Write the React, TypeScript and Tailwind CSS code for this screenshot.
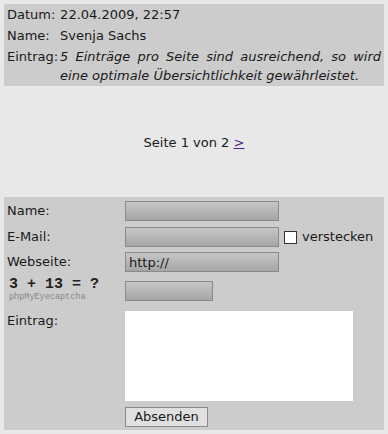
import React from 'react';

const inputCls =
  'h-[20px] border border-[#8a8a8a] bg-gradient-to-b from-[#c6c6c6] to-[#a6a6a6] px-[3px] text-[13px] leading-[18px] text-[#1a1a1a] outline-none';

const App: React.FC = () => {
  return (
    <div
      className="min-h-[434px] w-[388px] bg-[#e8e8e8] p-[4px] text-[13px] text-[#1a1a1a]"
      style={{ fontFamily: '"DejaVu Sans", Verdana, sans-serif' }}
    >
      {/* Entry */}
      <div className="grid grid-cols-[auto_1fr] gap-x-[2px] gap-y-[2px] bg-[#cccccc] pl-[3px] pr-[3px] pt-[1px] pb-[1px] leading-[19px]">
        <div>Datum:</div>
        <div>22.04.2009, 22:57</div>
        <div>Name:</div>
        <div>Svenja Sachs</div>
        <div>Eintrag:</div>
        <div className="text-justify italic">
          5 Einträge pro Seite sind ausreichend, so wird eine optimale Übersichtlichkeit gewährleistet.
        </div>
      </div>

      {/* Pagination */}
      <div className="flex h-[111px] items-center justify-center pt-[3px]">
        <span>
          Seite 1 von 2{' '}
          <a href="#" className="text-[#551a8b] underline">
            &gt;
          </a>
        </span>
      </div>

      {/* Form */}
      <div className="bg-[#cccccc] pl-[3px] pt-[4px] pb-[3px]">
        <div className="flex items-center">
          <label className="w-[118px]">Name:</label>
          <input className={`${inputCls} w-[154px]`} />
        </div>
        <div className="mt-[6px] flex items-center">
          <label className="w-[118px]">E-Mail:</label>
          <input className={`${inputCls} w-[154px]`} />
          <span className="ml-[5px] h-[13px] w-[13px] border border-[#333] bg-white" />
          <span className="ml-[5px]">verstecken</span>
        </div>
        <div className="mt-[5px] flex items-center">
          <label className="w-[118px]">Webseite:</label>
          <input className={`${inputCls} w-[154px]`} defaultValue="http://" />
        </div>
        <div className="mt-[5px] flex items-start">
          <div className="w-[118px] pl-[2px]">
            <div
              className="text-[15px] font-bold leading-[16px] text-[#222]"
              style={{ fontFamily: '"Liberation Mono", monospace' }}
            >
              3 + 13 = ?
            </div>
            <div
              className="text-[8.5px] leading-[9px] text-[#888]"
              style={{ fontFamily: '"Liberation Mono", monospace' }}
            >
              phpMyEyecaptcha
            </div>
          </div>
          <input className={`${inputCls} mt-[4px] w-[88px]`} />
        </div>
        <div className="mt-[9px] flex items-start">
          <label className="w-[118px] leading-[19px]">Eintrag:</label>
          <textarea className="h-[90px] w-[228px] resize-none border-0 bg-white outline-none" />
        </div>
        <div className="mt-[6px] flex">
          <div className="w-[118px]" />
          <button className="h-[20px] w-[83px] border border-[#8a8a8a] bg-[#e0e0e0] text-[13px] leading-[18px] text-[#1a1a1a]">
            Absenden
          </button>
        </div>
      </div>
    </div>
  );
};

export default App;
